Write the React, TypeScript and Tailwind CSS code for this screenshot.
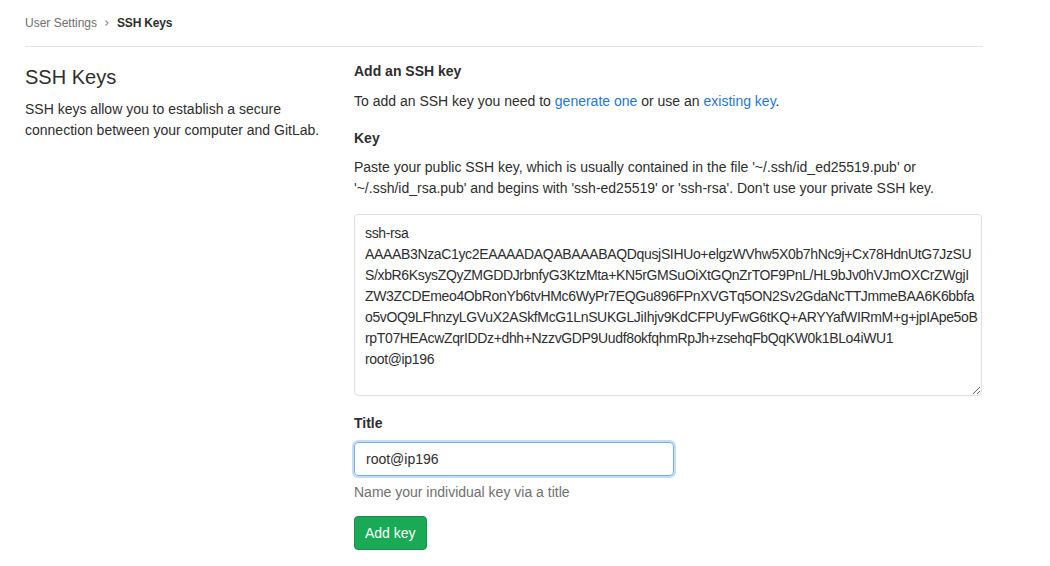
import React from "react";

const KEY = `ssh-rsa
AAAAB3NzaC1yc2EAAAADAQABAAABAQDqusjSIHUo+elgzWVhw5X0b7hNc9j+Cx78HdnUtG7JzSU
S/xbR6KsysZQyZMGDDJrbnfyG3KtzMta+KN5rGMSuOiXtGQnZrTOF9PnL/HL9bJv0hVJmOXCrZWgjI
ZW3ZCDEmeo4ObRonYb6tvHMc6WyPr7EQGu896FPnXVGTq5ON2Sv2GdaNcTTJmmeBAA6K6bbfa
o5vOQ9LFhnzyLGVuX2ASkfMcG1LnSUKGLJiIhjv9KdCFPUyFwG6tKQ+ARYYafWIRmM+g+jpIApe5oB
rpT07HEAcwZqrIDDz+dhh+NzzvGDP9Uudf8okfqhmRpJh+zsehqFbQqKW0k1BLo4iWU1
root@ip196`;

export default function App() {
  return (
    <div
      className="w-[1050px] h-[566px] bg-white text-[#2e2e2e] overflow-hidden"
      style={{ fontFamily: '"Liberation Sans", Arial, sans-serif' }}
    >
      <div className="ml-[25px] w-[958px]">
        <div className="h-[47px] border-b border-[#e5e5e5] flex items-center text-[12px]">
          <span className="text-[#707070]">User Settings</span>
          <svg className="mx-[6px]" width="8" height="8" viewBox="0 0 8 8">
            <path d="M2.5 1.5 L5 4 L2.5 6.5" fill="none" stroke="#909090" strokeWidth="1.1" />
          </svg>
          <span className="font-bold text-[#2e2e2e] tracking-[-0.2px]">SSH Keys</span>
        </div>
        <div className="flex">
          <div className="w-[329px] shrink-0">
            <h2 className="text-[20px] leading-[24px] mt-[18px] text-[#2e2e2e]">SSH Keys</h2>
            <p className="text-[14px] leading-[21px] mt-[10px] pr-[6px]">
              SSH keys allow you to establish a secure
              <br />
              connection between your computer and GitLab.
            </p>
          </div>
          <div className="w-[628px] text-[14px]">
            <h5 className="font-bold leading-[20px] mt-[14px]">Add an SSH key</h5>
            <p className="leading-[21px] mt-[10px]">
              To add an SSH key you need to{" "}
              <a className="text-[#1f78d1]">generate one</a> or use an{" "}
              <a className="text-[#1f78d1]">existing key</a>.
            </p>
            <div className="font-bold leading-[21px] mt-[16px]">Key</div>
            <p className="leading-[21px] mt-[8px]">
              Paste your public SSH key, which is usually contained in the file '~/.ssh/id_ed25519.pub' or
              <br />
              '~/.ssh/id_rsa.pub' and begins with 'ssh-ed25519' or 'ssh-rsa'. Don't use your private SSH key.
            </p>
            <textarea
              readOnly
              wrap="off"
              value={KEY}
              className="block mt-[15px] w-[628px] h-[182px] border border-[#e0e0e0] rounded-[4px] px-[10px] pt-[8px] pb-[4px] text-[14px] leading-[21px] text-[#2e2e2e] whitespace-pre overflow-hidden outline-none tracking-[-0.35px]"
              style={{ fontFamily: '"Liberation Sans", Arial, sans-serif' }}
            />
            <div className="font-bold leading-[21px] mt-[17px]">Title</div>
            <input
              readOnly
              value="root@ip196"
              className="block mt-[8px] w-[320px] h-[34px] border border-[#73afea] rounded-[4px] px-[11px] text-[14px] text-[#2e2e2e] outline-none shadow-[0_0_0_2px_rgba(31,120,209,0.25)]"
              style={{ fontFamily: '"Liberation Sans", Arial, sans-serif' }}
            />
            <p className="text-[#707070] leading-[21px] mt-[6px]">Name your individual key via a title</p>
            <button className="mt-[13px] h-[34px] px-[10px] rounded-[4px] bg-[#1aaa55] border border-[#168f48] text-white text-[14px]">
              Add key
            </button>
          </div>
        </div>
      </div>
    </div>
  );
}
